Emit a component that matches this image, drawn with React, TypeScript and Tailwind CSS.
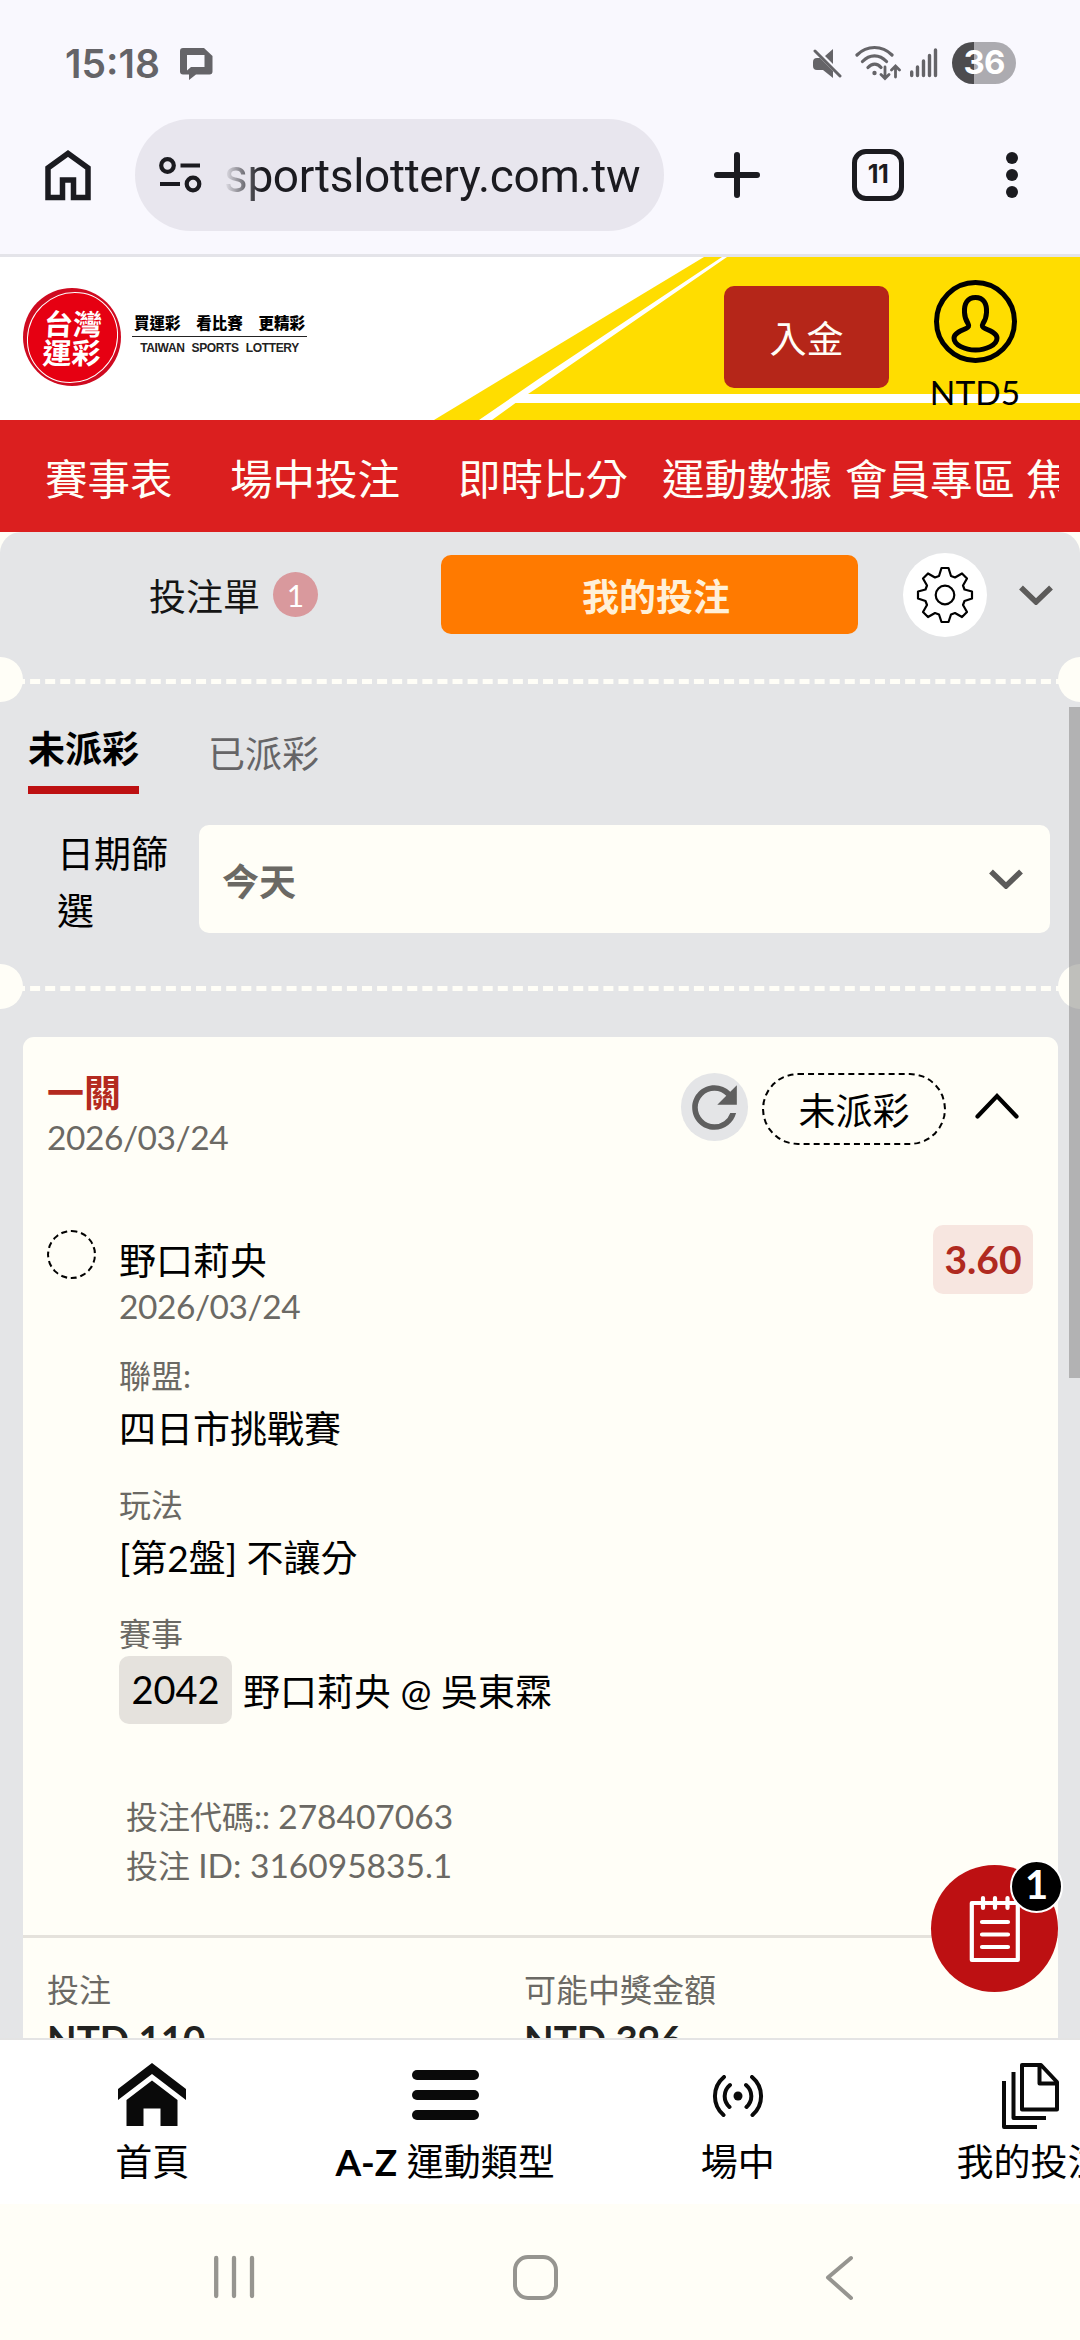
import type { ReactNode } from "react";

interface MenuItem {
	label: string;
	width: string;
}

const menuItems: MenuItem[] = [
	{ label: "賽事表", width: "w-[185px]" },
	{ label: "場中投注", width: "w-[228px]" },
	{ label: "即時比分", width: "w-[204px]" },
	{ label: "運動數據", width: "w-[183px]" },
	{ label: "會員專區", width: "w-[181px]" },
	{ label: "焦點", width: "w-[90px]" },
];

const StatusBar = () => (
	<div className="flex h-[119px] items-center pt-[7px] pl-[65px] pr-16 text-[#656468]">
		<span className="font-[Inter] text-[39px] font-semibold leading-none">15:18</span>
		<svg className="ml-[20px]" width="33" height="33" viewBox="0 0 33 33" fill="currentColor">
			<path fillRule="evenodd" d="M3 1h21l8.500 8V24.500a3 3 0 0 1-3 3H16L9 33v-5.500H3a3 3 0 0 1-3-3V4a3 3 0 0 1 3-3Zm4 7v15.500l4-3.500h13.500V8Z" />
		</svg>
		<div className="ml-auto flex items-center">
			<svg width="30" height="32" viewBox="0 0 30 32">
				<path d="M21 2v15l-8-8ZM5 11h3l13 13v7l-10-8H5a4 4 0 0 1-4-4v-4a4 4 0 0 1 4-4Z" fill="currentColor" />
				<path d="M3 4l25 25" stroke="currentColor" strokeWidth="3" strokeLinecap="round" />
			</svg>
			<svg className="ml-[13px]" width="46" height="36" viewBox="0 0 46 36" fill="none" stroke="currentColor" strokeWidth="3.200" strokeLinecap="round">
				<path d="M2 10c10-10 25-10 35 0M7.500 16.500c7-7.500 17-7.500 24 0M13 22.500c4-4.500 9.500-4.500 13 0" />
				<circle cx="19.500" cy="28" r="2.200" fill="currentColor" stroke="none" />
				<path d="M30 22v11M26 29.500l4 4 4-4M40.500 32V22M36.500 25l4-4 4 4" strokeWidth="2.800" />
			</svg>
			<svg className="ml-2" width="29" height="32" viewBox="0 0 29 32" stroke="currentColor" strokeWidth="3.400" strokeLinecap="round">
				<path d="M2.700 25v3.500M8.500 20v8.500M14.500 14v14.500M20.500 8.500v20M26.500 3v25.500" />
			</svg>
			<span className="ml-[14px] flex h-[42px] w-16 items-center justify-center rounded-full bg-linear-to-r from-[#4d4c4f] from-[35%] to-[#acabb0] to-[35%] font-[Inter] text-[33px] font-bold tracking-tight text-white">36</span>
		</div>
	</div>
);

const BrowserBar = () => (
	<div className="flex h-[138px] items-start border-b-[3px] border-[#e4e4e9] text-[#1b1b20]">
		<div className="flex h-[112px] w-full items-center">
			<svg className="ml-[45px]" width="46" height="52" viewBox="0 0 46 52" fill="none" stroke="currentColor" strokeWidth="5.500">
				<path d="M3 48.500V19L23 4.500 43 19v29.500H28.500V31h-11v17.500Z" />
			</svg>
			<div className="ml-11 flex h-[112px] w-[529px] items-center rounded-full bg-[#e8e6ee] pl-6">
				<svg width="43" height="38" viewBox="0 0 43 38" fill="none" stroke="currentColor" strokeWidth="4.200">
					<circle cx="8.500" cy="9.500" r="6.300" />
					<circle cx="34" cy="28" r="6.300" />
					<path d="M21.500 9.500H41M1 28h20" />
				</svg>
				<span className="ml-[22px] bg-linear-to-r from-[#e8e6ee] to-[#1b1b20] to-[38px] bg-clip-text pt-[2px] font-[Roboto] text-[46px] leading-[64px] tracking-[-0.350px] text-transparent">sportslottery.com.tw</span>
			</div>
			<svg className="ml-[49px]" width="48" height="48" viewBox="0 0 48 48" stroke="currentColor" strokeWidth="6" strokeLinecap="round">
				<path d="M24 4v40M4 24h40" />
			</svg>
			<span className="ml-[91px] flex h-[52px] w-[52px] items-center justify-center rounded-[14px] border-[5.5px] border-[#1b1b20] font-[Inter] text-[25px] font-bold tracking-tight">11</span>
			<svg className="ml-[101px]" width="14" height="48" viewBox="0 0 14 48" fill="currentColor">
				<circle cx="7" cy="7" r="6" />
				<circle cx="7" cy="24" r="6" />
				<circle cx="7" cy="41" r="6" />
			</svg>
		</div>
	</div>
);

const Stripes = () => (
	<svg className="absolute inset-0" width="1080" height="163" viewBox="0 0 1080 163">
		<path d="M434 163 704 0h376v163Z" fill="#ffdd00" />
		<path d="M479 163 540 121 722 0h5L540 129l-12 8h552v9H515.500L492 163Z" fill="#fff" />
	</svg>
);

const SiteHeader = () => (
	<header className="relative h-[163px] bg-white">
		<Stripes />
		<div className="relative flex h-full items-start">
			<div className="mt-[31px] ml-[23px] flex h-[98px] w-[98px] items-center justify-center rounded-full bg-[#cf0a20]">
				<div className="flex h-[91px] w-[91px] -skew-x-3 flex-col items-center justify-center rounded-full border-[1.5px] border-white bg-[#e60012] text-[29px] leading-[29px] font-bold text-white">
					<span>台灣</span>
					<span>運彩</span>
				</div>
			</div>
			<div className="mt-[56px] ml-[11px] flex w-[175px] flex-col items-center">
				<div className="flex w-full justify-between border-b border-[#222] px-[2px] pb-[3px] text-[15.500px] leading-5 font-black text-black">
					<span>買運彩</span>
					<span>看比賽</span>
					<span>更精彩</span>
				</div>
				<span className="mt-[3px] font-['Liberation_Sans'] text-[12px] leading-4 font-bold tracking-[-0.350px] whitespace-nowrap text-[#222] [word-spacing:4px]">TAIWAN SPORTS LOTTERY</span>
			</div>
			<button className="mt-[29px] ml-[417px] flex h-[102px] w-[165px] items-center justify-center rounded-[10px] bg-[#b52619] pt-[3px] text-[37px] text-[#fffef7]">入金</button>
			<div className="mt-[22px] ml-[36px] flex w-[100px] flex-col items-center">
				<svg width="85" height="85" viewBox="0 0 85 85" fill="none" stroke="#000" strokeWidth="5">
					<circle cx="42.500" cy="42.500" r="39" />
					<path d="M42.500 18.500c-8 0-11.500 6-11 15 .2 5 1.500 8 3.500 11 1.500 2.500.5 4-2 5-6 2.500-12 5-12 9.500 0 7 11 12 21.500 12s21.500-5 21.500-12c0-4.500-6-7-12-9.500-2.500-1-3.500-2.500-2-5 2-3 3.300-6 3.500-11 .5-9-3-15-11-15Z" />
				</svg>
				<span className="mt-[9px] text-[33.500px] leading-[38px] text-black">NTD5</span>
			</div>
		</div>
	</header>
);

const MainMenu = () => (
	<nav className="h-[112px] bg-[#db1f1f] pr-[21px] pl-[45px]">
		<div className="flex h-full items-center overflow-hidden pt-[5px] text-[42.500px] whitespace-nowrap text-[#fffef7]">
			{menuItems.map((item) => (
				<span key={item.label} className={`${item.width} shrink-0`}>
					{item.label}
				</span>
			))}
		</div>
	</nav>
);

const ChevronDown = () => (
	<svg width="36" height="20" viewBox="0 0 36 20" fill="none" stroke="#5c5b5a" strokeWidth="5.500">
		<path d="M3 2.500 18 17 33 2.500" />
	</svg>
);

const BetTabs = () => (
	<div className="flex h-[125px] items-center">
		<div className="ml-[149px] flex w-[292px] items-center text-[37px] text-[#151515]">
			<span className="pt-1">投注單</span>
			<span className="ml-[13px] flex h-[45px] w-[45px] items-center justify-center rounded-full bg-[#d9999d] text-[30px] leading-none text-white">1</span>
		</div>
		<button className="flex h-[79px] w-[417px] items-center justify-center rounded-[10px] bg-[#ff7a00] pt-1 pl-[13px] text-[37px] font-bold text-[#fff0d8]">我的投注</button>
		<div className="ml-[45px] flex h-[84px] w-[84px] items-center justify-center rounded-full bg-white">
			<svg width="58" height="58" viewBox="0 0 58 58" fill="none" stroke="#000" strokeWidth="2.200" strokeLinejoin="round">
				<path d="M25.500 2h7l2.500 8 4 1.500 7-4 5 5-4 7 1.500 4 7.500 2v7l-7.500 2.500-1.500 4 4 7-5 5-7-4-4 1.500-2.500 7.500h-7L23 48.500 19 47l-7 4-5-5 4-7-1.500-4L2 32.500v-7l7.500-2 1.500-4-4-7 5-5 7 4 4-1.500Z" />
				<circle cx="29" cy="29" r="9.300" />
			</svg>
		</div>
		<div className="ml-[31px]">
			<ChevronDown />
		</div>
	</div>
);

// Ticket style separator with a notch on both sides
const Perforation = () => (
	<div className="flex h-[45px] justify-between overflow-hidden">
		<span className="-ml-[22px] h-[45px] w-[45px] shrink-0 rounded-full bg-[#fffef7]" />
		<span className="-mx-[8px] mt-[22px] flex-1 border-t-[5px] border-dashed border-[#fffef7]" />
		<span className="-mr-[23px] h-[45px] w-[45px] shrink-0 rounded-full bg-[#fffef7]" />
	</div>
);

const Filters = () => (
	<div className="h-[262px] text-[37px]">
		<div className="flex h-[92px] items-end pl-[28px]">
			<span className="h-[74px] border-b-[8px] border-[#bd1012] leading-[57px] font-bold text-black">未派彩</span>
			<span className="ml-[69px] h-[74px] pt-[5px] leading-[57px] text-[#666567]">已派彩</span>
		</div>
		<div className="mt-[31px] flex pl-[57px]">
			<label className="w-[142px] pr-[28px] leading-[57px] text-black">日期篩選</label>
			<div className="flex h-[108px] w-[851px] items-center justify-between rounded-[10px] bg-[#fffef7] pr-[26px] pl-[23px] font-bold text-[#6b6964]">
				<span className="pt-[5px]">今天</span>
				<ChevronDown />
			</div>
		</div>
	</div>
);

interface FieldProps {
	label: string;
	children: ReactNode;
}

const Field = ({ label, children }: FieldProps) => (
	<div className="mt-[25px]">
		<div className="text-[32px] leading-[44px] text-[#6b6964]">{label}</div>
		{children}
	</div>
);

const BetCard = () => (
	<div className="mx-[23px] mt-[28px] h-[1100px] w-[1035px] rounded-t-[11px] bg-[#fffef7]">
		<div className="flex pt-[33px] pl-[24px]">
			<div className="w-[634px]">
				<div className="text-[37px] leading-[45px] font-bold text-[#b42a20]">一關</div>
				<div className="text-[33.500px] leading-[45px] tracking-[-0.450px] text-[#6b6964]">2026/03/24</div>
			</div>
			<div className="mt-[3px] flex h-[72px] items-center">
				<span className="-mt-[4px] flex h-[68px] w-[67px] items-center justify-center rounded-full bg-[#e4e5e7]">
					<svg width="67" height="67" viewBox="0 0 24 24" fill="#5f5f5f" className="shrink-0">
						<path d="M17.650 6.350A7.958 7.958 0 0 0 12 4c-4.420 0-7.990 3.580-7.990 8s3.570 8 7.990 8c3.730 0 6.840-2.550 7.730-6h-2.080A5.990 5.990 0 0 1 12 18c-3.310 0-6-2.690-6-6s2.690-6 6-6c1.660 0 3.140.690 4.220 1.780L13 11h7V4l-2.350 2.350z" />
					</svg>
				</span>
				<span className="ml-[14px] flex h-[72px] w-[184px] items-center justify-center rounded-full border-2 border-dashed border-black pt-1 text-[37px] text-black">未派彩</span>
				<svg className="ml-[28px] -mt-[6px]" width="46" height="28" viewBox="0 0 46 28" fill="none" stroke="#000" strokeWidth="4.200" strokeLinecap="round">
					<path d="M3.500 24.500 23 4l19.500 20.500" />
				</svg>
			</div>
		</div>

		<div className="mt-[65px] flex pr-[25px] pl-[24px]">
			<span className="mt-[5px] h-[49px] w-[49px] rounded-full border-2 border-dashed border-black" />
			<div className="ml-[23px] flex-1 pt-[14px] text-[37px] text-black">
				<div className="-mt-px leading-[45px]">野口莉央</div>
				<div className="mt-px text-[33.500px] leading-[45px] tracking-[-0.450px] text-[#6b6964]">2026/03/24</div>
				<Field label="聯盟:">
					<div className="pt-px leading-[59px]">四日市挑戰賽</div>
				</Field>
				<Field label="玩法">
					<div className="pt-px leading-[59px]">[第2盤] 不讓分</div>
				</Field>
				<Field label="賽事">
					<div className="flex h-[68px] items-center">
						<span className="mr-[11px] flex h-full w-[113px] items-center justify-center rounded-[10px] bg-[#e5e2dd] pb-[2px] text-[38px]">2042</span>
						<span className="pt-1">野口莉央 @ 吳東霖</span>
					</div>
				</Field>
				<div className="mt-[68px] mb-px pl-[7px] text-[32px] leading-[49px] text-[#6b6964]">
					<div>
						投注代碼:: <span className="text-[33.500px]">278407063</span>
					</div>
					<div>
						投注 <span className="text-[33.500px]">ID: 316095835.1</span>
					</div>
				</div>
			</div>
			<span className="flex h-[69px] w-[100px] items-center justify-center rounded-[10px] bg-[#f7e6e0] text-[39px] font-bold text-[#b02a20]">3.60</span>
		</div>

		<div className="mt-[44px] flex border-t-[3px] border-[#e5e2dc] pt-[27px] pl-[24px]">
			<div className="w-[477px]">
				<div className="text-[32px] leading-[50px] text-[#6b6964]">投注</div>
				<div className="text-[38.500px] leading-[49px] font-bold text-[#222220]">NTD 110</div>
			</div>
			<div>
				<div className="text-[32px] leading-[50px] text-[#6b6964]">可能中獎金額</div>
				<div className="text-[38.500px] leading-[49px] font-bold text-[#222220]">NTD 396</div>
			</div>
		</div>
	</div>
);

const BetslipButton = () => (
	<button className="absolute top-[1865px] left-[931px] flex h-[127px] w-[127px] items-center justify-center rounded-full bg-[#bd1012]">
		<svg width="52" height="70" viewBox="0 0 52 70" fill="none" stroke="#fff" strokeWidth="4.200" strokeLinecap="round" strokeLinejoin="round">
			<path d="M2.800 9h46v57h-46Z" />
			<path d="M14 4v10M26 4v10M38.500 4v10M13 28h26M13 40.500h26M13 53h26" />
		</svg>
		<span className="absolute -top-[5px] left-[79px] flex h-[53px] w-[53px] items-center justify-center rounded-full border-2 border-white bg-black pb-[6px] text-[40px] leading-none font-bold text-white">1</span>
	</button>
);

interface TabProps {
	icon: ReactNode;
	children: ReactNode;
}

const Tab = ({ icon, children }: TabProps) => (
	<div className="flex w-[292.700px] shrink-0 flex-col items-center pt-[18px]">
		<div className="flex h-[76px] items-center">{icon}</div>
		<div className="text-[37px] leading-[56px] whitespace-nowrap text-black">{children}</div>
	</div>
);

const BottomTabs = () => (
	<nav className="flex h-[166px] overflow-hidden border-t-2 border-[#e4e4e4] bg-white pl-[6px]">
		<Tab
			icon={
				<svg className="-mt-[3px]" width="68" height="63" viewBox="0 0 68 63" fill="#0a0a0a">
					<path d="M34 0 68 26v11L34 11 0 37V26Z" />
					<path d="M34 17.500 59.500 37v26h-17V45.500h-17V63h-17V37Z" />
				</svg>
			}
		>
			首頁
		</Tab>
		<Tab
			icon={
				<svg className="-mt-[2px]" width="67" height="50" viewBox="0 0 67 50" fill="#0a0a0a">
					<rect width="67" height="10" rx="5" />
					<rect y="20" width="67" height="10" rx="5" />
					<rect y="40" width="67" height="10" rx="5" />
				</svg>
			}
		>
			<b>A-Z</b> 運動類型
		</Tab>
		<Tab
			icon={
				<svg width="52" height="42" viewBox="0 0 52 42" fill="none" stroke="#0a0a0a" strokeWidth="4" strokeLinecap="round">
					<path d="M12 2C0 12 0 30 11.500 40M40 2c12 10 12 28 .500 38M18 10c-7 6-7 16-.500 22M34 10c7 6 7 16 .500 22" />
					<circle cx="26" cy="21" r="4.500" fill="#0a0a0a" stroke="none" />
				</svg>
			}
		>
			場中
		</Tab>
		<Tab
			icon={
				<svg width="57" height="66" viewBox="0 0 57 66" fill="none" stroke="#0a0a0a" strokeWidth="4" strokeLinejoin="round">
					<path d="M20 2h19l16 17v27.500H20ZM37.500 3v17.500H54M11.500 9v46H44M2 18v46h33" />
				</svg>
			}
		>
			我的投注
		</Tab>
	</nav>
);

const SystemNav = () => (
	<div className="flex h-[136px] items-start bg-[#fffef7] pt-[51px] pl-[214px]">
		<svg width="41" height="44" viewBox="0 0 41 44" stroke="#969590" strokeWidth="4.300" strokeLinecap="round">
			<path d="M2.200 3v38M20 3v38M38 3v38" />
		</svg>
		<span className="ml-[258px] h-[45px] w-[45px] rounded-[15px] border-4 border-[#969590]" />
		<svg className="ml-[266px]" width="30" height="46" viewBox="0 0 30 46" fill="none" stroke="#969590" strokeWidth="4" strokeLinecap="round" strokeLinejoin="round">
			<path d="M27 3 4 22.500 27 43" />
		</svg>
	</div>
);

const App = () => {
	return (
		<div lang="zh-Hant-TW" className="relative h-[2340px] w-[1080px] overflow-hidden bg-[#f9f8fe] font-[Lato,'Noto_Sans_CJK_TC',sans-serif]">
			<StatusBar />
			<BrowserBar />
			<SiteHeader />
			<MainMenu />
			<div className="h-[1506px] overflow-hidden bg-[#fffef7]">
				<div className="h-full overflow-hidden rounded-t-[21px] bg-[#e4e5e7]">
					<BetTabs />
					<Perforation />
					<Filters />
					<Perforation />
					<BetCard />
				</div>
			</div>
			<BottomTabs />
			<SystemNav />
			<div className="absolute top-[707px] right-0 h-[671px] w-[11px] bg-[#80808080]" />
			<BetslipButton />
		</div>
	);
};

export default App;
